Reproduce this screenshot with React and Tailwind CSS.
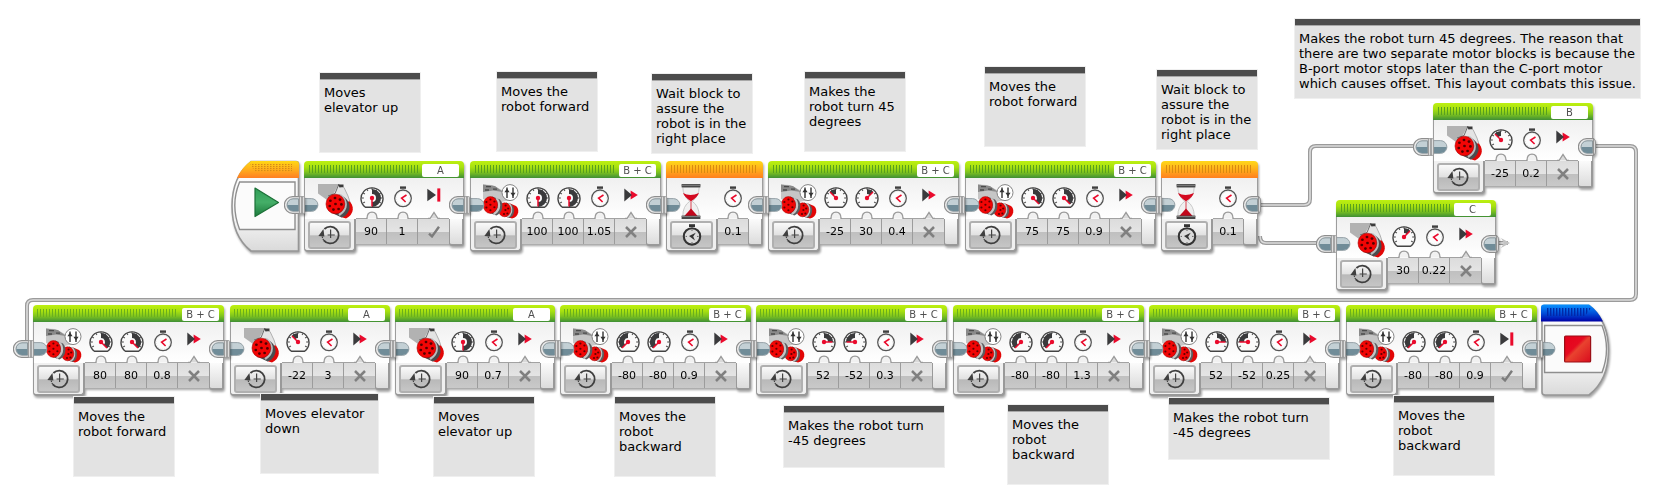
import React from "react";

const GO = -45;

const NODES = [
  {
    kind: "large", x: 304, y: 161, port: "A", motor: "single", end: "brake",
    fields: [{ v: "90", g: 180 }, { v: "1" }],
  },
  {
    kind: "large", x: 470, y: 161, port: "B + C", motor: "double", end: "coast",
    fields: [{ v: "100", g: 180 }, { v: "100", g: 180 }, { v: "1.05" }],
  },
  { kind: "wait", x: 666, y: 161, fields: [{ v: "0.1" }] },
  {
    kind: "large", x: 768, y: 161, port: "B + C", motor: "double", end: "coast",
    fields: [{ v: "-25", g: GO }, { v: "30", g: 45 }, { v: "0.4" }],
  },
  {
    kind: "large", x: 965, y: 161, port: "B + C", motor: "double", end: "coast",
    fields: [{ v: "75", g: 135 }, { v: "75", g: 135 }, { v: "0.9" }],
  },
  { kind: "wait", x: 1161, y: 161, open: true, fields: [{ v: "0.1" }] },
  {
    kind: "large", x: 1433, y: 103, port: "B", motor: "single", end: "coast", open: true,
    fields: [{ v: "-25", g: GO }, { v: "0.2" }],
  },
  {
    kind: "large", x: 1336, y: 200, port: "C", motor: "single", end: "coast", open: true,
    fields: [{ v: "30", g: 45 }, { v: "0.22" }],
  },
  {
    kind: "large", x: 33, y: 305, port: "B + C", motor: "double", end: "coast", stripes: true,
    fields: [{ v: "80", g: 135 }, { v: "80", g: 135 }, { v: "0.8" }],
  },
  {
    kind: "large", x: 230, y: 305, port: "A", motor: "single", end: "coast", stripes: true,
    fields: [{ v: "-22", g: GO }, { v: "3" }],
  },
  {
    kind: "large", x: 395, y: 305, port: "A", motor: "single", end: "coast", stripes: true,
    fields: [{ v: "90", g: 180 }, { v: "0.7" }],
  },
  {
    kind: "large", x: 560, y: 305, port: "B + C", motor: "double", end: "coast", stripes: true,
    fields: [{ v: "-80", g: -135 }, { v: "-80", g: -135 }, { v: "0.9" }],
  },
  {
    kind: "large", x: 756, y: 305, port: "B + C", motor: "double", end: "coast", stripes: true,
    fields: [{ v: "52", g: 90 }, { v: "-52", g: -90 }, { v: "0.3" }],
  },
  {
    kind: "large", x: 953, y: 305, port: "B + C", motor: "double", end: "coast", stripes: true,
    fields: [{ v: "-80", g: -135 }, { v: "-80", g: -135 }, { v: "1.3" }],
  },
  {
    kind: "large", x: 1149, y: 305, port: "B + C", motor: "double", end: "coast", stripes: true,
    fields: [{ v: "52", g: 90 }, { v: "-52", g: -90 }, { v: "0.25" }],
  },
  {
    kind: "large", x: 1346, y: 305, port: "B + C", motor: "double", end: "brake", stripes: true,
    fields: [{ v: "-80", g: -135 }, { v: "-80", g: -135 }, { v: "0.9" }],
  },
];

const NOTES = [
  { x: 319, y: 72, size: "small", lines: ["Moves", "elevator up"] },
  { x: 496, y: 71, size: "small", lines: ["Moves the", "robot forward"] },
  { x: 651, y: 73, size: "small", lines: ["Wait block to", "assure the", "robot is in the", "right place"] },
  { x: 804, y: 71, size: "small", lines: ["Makes the", "robot turn 45", "degrees"] },
  { x: 984, y: 66, size: "small", lines: ["Moves the", "robot forward"] },
  { x: 1156, y: 69, size: "small", lines: ["Wait block to", "assure the", "robot is in the", "right place"] },
  {
    x: 1294, y: 18, size: "large",
    lines: [
      "Makes the robot turn 45 degrees. The reason that",
      "there are two separate motor blocks is because the",
      "B-port motor stops later than the C-port motor",
      "which causes offset. This layout combats this issue.",
    ],
  },
  { x: 73, y: 396, size: "small", lines: ["Moves the", "robot forward"] },
  { x: 260, y: 393, size: "medium", lines: ["Moves elevator", "down"] },
  { x: 433, y: 396, size: "small", lines: ["Moves", "elevator up"] },
  { x: 614, y: 396, size: "small", lines: ["Moves the", "robot", "backward"] },
  { x: 783, y: 405, size: "wide", lines: ["Makes the robot turn", "-45 degrees"] },
  { x: 1007, y: 404, size: "small", lines: ["Moves the", "robot", "backward"] },
  { x: 1168, y: 397, size: "wide", lines: ["Makes the robot turn", "-45 degrees"] },
  { x: 1393, y: 395, size: "small", lines: ["Moves the", "robot", "backward"] },
];

const NOTE_SIZE = {
  small: "w-[102px] h-[81px]",
  medium: "w-[119px] h-[81px]",
  wide: "w-[162px] h-[63px]",
  large: "w-[347px] h-[81px]",
};

const BLOCK_WIDTH = { 1: "w-[97px]", 3: "w-[160px]", 4: "w-[191px]" };

function point(angle, r) {
  const a = (angle * Math.PI) / 180;
  return `${(12 + r * Math.sin(a)).toFixed(2)} ${(12 - r * Math.cos(a)).toFixed(2)}`;
}

function Gauge({ angle }) {
  const sweep = angle > 0 ? 1 : 0;
  const ticks = [-120, -90, -60, -30, 0, 30, 60, 90, 120];
  return (
    <svg viewBox="0 0 24 23" className="h-[23px] w-6" aria-hidden="true">
      <path d="M5.4 21.3A11 10.8 0 1 1 18.6 21.3Z" fill="#fafafa" stroke="#444" strokeWidth="1.4" strokeLinejoin="round" />
      {ticks.map((t) => (
        <path key={t} d={`M${point(t, 10.2)}L${point(t, 8.2)}`} stroke="#555" strokeWidth="1.1" />
      ))}
      <path
        d={`M${point(0, 9)}A9 9 0 0 ${sweep} ${point(angle, 9)}L${point(angle, 4)}A4 4 0 0 ${1 - sweep} ${point(0, 4)}Z`}
        fill="#3a3a3c"
      />
      <path d={`M12 12L${point(angle, 8.4)}`} stroke="#ea0a2c" strokeWidth="1.5" />
      <circle cx="12" cy="12" r="2.2" fill="#ea0a2c" />
    </svg>
  );
}

function Stopwatch() {
  return (
    <svg viewBox="0 0 20 22" className="h-[22px] w-5" aria-hidden="true">
      <rect x="7" y="0.4" width="6" height="2.4" fill="#3f3f3f" />
      <circle cx="10" cy="12.3" r="8.3" fill="#fdfdfd" stroke="#555" strokeWidth="1.3" />
      <circle cx="10" cy="12.3" r="6.9" fill="none" stroke="#d5d5d5" strokeWidth="0.8" strokeDasharray="1 1.2" />
      <path d="M13.5 9L8.6 12.2L12.6 16" fill="none" stroke="#ea0a2c" strokeWidth="1.6" />
    </svg>
  );
}

function EndIcon({ type }) {
  return (
    <svg viewBox="0 0 14 14" className="mb-1 h-3.5 w-3.5" aria-hidden="true">
      {type === "brake" ? (
        <>
          <path d="M0.3 0.8L9 7L0.3 13.2Z" fill="#3a3a3c" />
          <rect x="10.3" y="0.4" width="3" height="13.2" fill="#ea0a2c" />
        </>
      ) : (
        <>
          <path d="M6.6 2.4L13.8 7L6.6 11.6Z" fill="#ea0a2c" />
          <path d="M0.3 0.6L8 7L0.3 13.4Z" fill="#3a3a3c" />
        </>
      )}
    </svg>
  );
}

function SingleMotor() {
  return (
    <svg viewBox="0 0 35 35" className="h-[35px] w-[35px]" aria-hidden="true">
      <path d="M18 0.5L26 3.5L30 12L34 24L25 30L10 18Z" fill="#e4e4e4" stroke="#a8a8a8" strokeWidth="0.9" />
      <path d="M0 0H21L15.5 9.5L9 16L0 9.5Z" fill="#b2b2b2" />
      <path d="M21 0L17 9.5L10 12" stroke="#6d6d6d" strokeWidth="1" fill="none" />
      <path d="M20 0.4L25.5 0.4L25.5 3L21.5 3.6Z" fill="#3b3b3b" />
      <path d="M31 17Q35 20.4 34.8 25.4Q34.4 31 28 34.4L23 33L26 22Z" fill="#e20606" />
      <path d="M21 10.6Q28 13 30.6 18.6Q33 24 29.6 29Q27.6 32.6 23.6 33.6L13 28.6Z" fill="#4a4c4e" />
      <path d="M22 11Q27.4 15 27.6 20.6Q27.6 26.6 21 31" stroke="#b9bbbd" strokeWidth="2.6" fill="none" />
      <ellipse cx="17.4" cy="20" rx="9.4" ry="9.8" fill="#f20505" stroke="#a80000" strokeWidth="0.6" />
      {[
        [17.5, 20], [17, 14], [22, 15.6], [23.4, 20.4], [20.6, 25], [15.4, 25.6], [11.8, 22], [12.4, 16.8],
      ].map(([x, y]) => (
        <ellipse key={`${x}-${y}`} cx={x} cy={y} rx="1.4" ry="1.3" fill="#520000" />
      ))}
    </svg>
  );
}

function DoubleMotor() {
  return (
    <svg viewBox="0 0 36 35" className="h-[35px] w-9" aria-hidden="true">
      <path d="M0 0.4L9 1L19 6L27 16L14 19L0 15Z" fill="#c6c6c6" />
      <path d="M0 0.4L12 2L20 8L10 6.6L0 8Z" fill="#8a8a8a" />
      <path d="M3 2.6H8M10 5.2H14M2 6H6" stroke="#4b4b4b" strokeWidth="1.3" />
      <path d="M26 19L33 22Q35.8 24.4 35.2 28.6Q34 33.4 29 34.6L24 33Z" fill="#e20606" />
      <path d="M23 18.6L29 20.8Q32 24 30.8 28.8Q30 32.6 26.6 34L18 31Z" fill="#5b5d5f" />
      <path d="M25.6 19.6Q29 23 28 28Q27 31.6 24 33.2" stroke="#c4c4c4" strokeWidth="2.2" fill="none" />
      <ellipse cx="21.6" cy="25.8" rx="6.2" ry="7" fill="#f20505" stroke="#a80000" strokeWidth="0.5" />
      <path d="M9 12.4L17 15.6Q20.4 19.6 19 25Q17.8 29.4 13.4 31.4L4 28Z" fill="#5b5d5f" />
      <path d="M13 14.4Q17 18.4 15.6 24Q14.4 28.2 10.6 30" stroke="#c4c4c4" strokeWidth="2.6" fill="none" />
      <ellipse cx="7.4" cy="21" rx="7.2" ry="8.4" fill="#f20505" stroke="#a80000" strokeWidth="0.5" />
      {[
        [7.4, 20.8], [7.4, 15.4], [11.4, 17.6], [11.4, 23.2], [7.4, 26.2], [3.4, 23.6], [3.4, 18],
        [22.4, 26], [22.6, 21.6], [25.2, 24.4], [24.4, 29.4], [21, 30],
      ].map(([x, y]) => (
        <ellipse key={`${x}-${y}`} cx={x} cy={y} rx="1.1" ry="1" fill="#600000" />
      ))}
      <circle cx="27" cy="8.6" r="8" fill="#fff" stroke="#777" strokeWidth="0.9" />
      <path d="M24 3.4V14M30 3.4V14" stroke="#333" strokeWidth="1.4" />
      <path d="M21.4 8.2L24 4.6L26.6 8.2ZM27.4 8.8L30 12.4L32.6 8.8Z" fill="#333" />
    </svg>
  );
}

function Hourglass() {
  return (
    <svg viewBox="0 0 20 35" className="h-[35px] w-5" aria-hidden="true">
      <path d="M1.8 3H18.2Q18.2 12 11.2 17.3Q18.2 22 18.2 32H1.8Q1.8 22 8.8 17.3Q1.8 12 1.8 3Z" fill="#f0f0f0" stroke="#c4c4c4" strokeWidth="0.9" />
      <path d="M2 9Q9 12.8 18 9Q16 13.8 10.4 17H9.6Q4 13.8 2 9Z" fill="#d40920" />
      <path d="M10 16V27" stroke="#d6303f" strokeWidth="0.9" />
      <path d="M10 24.4L16.6 32H3.4Z" fill="#c2071c" />
      <rect x="0.6" y="0" width="18.8" height="3.4" fill="#484848" />
      <rect x="0.6" y="0.8" width="18.8" height="0.9" fill="#8d8d8d" />
      <rect x="0.6" y="31.6" width="18.8" height="3.4" fill="#484848" />
      <rect x="0.6" y="32.2" width="18.8" height="0.8" fill="#8d8d8d" />
    </svg>
  );
}

function TimeModeIcon() {
  return (
    <svg viewBox="0 0 24 20" className="h-5 w-6" aria-hidden="true">
      <path d="M6.4 4A8.4 8.4 0 1 1 5.8 15.4" fill="none" stroke="#3f3f3f" strokeWidth="1.8" />
      <path d="M5.8 15.4A8.4 8.4 0 0 1 4.2 10" fill="none" stroke="#3f3f3f" strokeWidth="1.2" strokeDasharray="1.6 1" />
      <path d="M0.4 11L5.4 4L6.4 11.4Z" fill="#3f3f3f" />
      <path d="M12.6 4.4V13M9.6 10H16.8" stroke="#444" strokeWidth="1.2" />
    </svg>
  );
}

function WaitModeIcon() {
  return (
    <svg viewBox="0 0 20 22" className="h-[22px] w-5" aria-hidden="true">
      <rect x="7" y="0.2" width="6" height="2.8" fill="#333" />
      <circle cx="10" cy="12.4" r="8.2" fill="#dadada" stroke="#333" strokeWidth="2.1" />
      <path d="M13.8 8.8L7 12L13 16.4L11.2 12.4Z" fill="#333" />
      <path d="M10 5.6V7M10 18V19.2M3.6 12.4H5M15 12.4H16.6" stroke="#666" strokeWidth="1" />
    </svg>
  );
}

function Cross() {
  return (
    <svg viewBox="0 0 12 12" className="h-3 w-3" aria-hidden="true">
      <path d="M1 1L11 11M11 1L1 11" stroke="#808080" strokeWidth="2.5" />
    </svg>
  );
}

function Check() {
  return (
    <svg viewBox="0 0 12 12" className="h-3 w-3" aria-hidden="true">
      <path d="M1 7.6L4 10.4L11 0.8" fill="none" stroke="#7c7c7c" strokeWidth="2.4" />
    </svg>
  );
}

function Socket() {
  return (
    <svg viewBox="0 0 16 18" className="h-[18px] w-4" aria-hidden="true">
      <path d="M0 2.6H7.5A6.4 6.4 0 0 1 7.5 15.4H0Z" fill="#c3d0d5" stroke="#8f9ba0" strokeWidth="0.9" />
      <path d="M0 9H13.6A6.2 6.2 0 0 1 7.5 15H0Z" fill="#708c98" />
    </svg>
  );
}

function Plug({ open }) {
  return (
    <svg viewBox="0 0 22 18" className="h-[18px] w-[22px]" aria-hidden="true">
      <path d="M15.6 0.6H8.6A8.2 8.4 0 0 0 8.6 17.4H15.6Z" fill="#ededed" stroke="#8e8e8e" strokeWidth="1.2" />
      <path d="M14.6 2.8H9A6 6.2 0 0 0 9 15.2H14.6Z" fill="#c3d0d5" stroke="#7d8a90" strokeWidth="0.9" />
      <path d="M14.4 9H3.4A5.8 6 0 0 0 9 15H14.4Z" fill="#708c98" />
      {open ? (
        <path d="M15.4 0.8Q17.4 1.4 17.4 4V14Q17.4 16.6 15.4 17.2Z" fill="#e2e2e2" stroke="#8e8e8e" strokeWidth="1" />
      ) : (
        <>
          <rect x="15.4" y="0.6" width="5.2" height="16.8" rx="1" fill="#dedede" stroke="#9a9a9a" strokeWidth="1" />
          <path d="M18 1V17" stroke="#7e7e7e" strokeWidth="1.2" />
        </>
      )}
    </svg>
  );
}

function Bump({ pointed }) {
  return (
    <div className="flex h-[7px] w-full items-end">
      <span className="h-px flex-1 bg-[#a2a2a2]" />
      <svg viewBox="0 0 12 8" className="-mt-px h-2 w-3" aria-hidden="true">
        {pointed ? (
          <path d="M0 7.5H2L6 1.4L10 7.5H12" fill="#d9d9d9" stroke="#9a9a9a" strokeWidth="1.3" />
        ) : (
          <path d="M0 7.5H1Q1 1.2 6 1.2Q11 1.2 11 7.5H12" fill="#f1f1f1" stroke="#9a9a9a" strokeWidth="1.3" />
        )}
      </svg>
      <span className="h-px flex-1 bg-[#a2a2a2]" />
    </div>
  );
}

function Column({ icon, pointed, last, children }) {
  return (
    <div className="flex min-w-0 flex-1 flex-col">
      <div className="flex h-[34px] items-center justify-center pt-1">{icon}</div>
      <Bump pointed={pointed} />
      <div
        className={`flex h-[25px] items-center justify-center pt-px bg-[linear-gradient(#dcdcdc,#e4e4e4_50%,#c0c0c0_54%,#c9c9c9)] ${
          last ? "" : "border-r border-[#9c9c9c]"
        }`}
      >
        {children}
      </div>
    </div>
  );
}

function Block({ node }) {
  const wait = node.kind === "wait";
  const count = node.fields.length + (node.end ? 1 : 0);
  const head = wait
    ? "bg-[linear-gradient(#ffd91a,#ffb21a_45%,#ff7f1e)]"
    : "bg-[linear-gradient(#bdf011,#a9e20f_35%,#7fc41f_65%,#3f8f35)]";
  const grip = wait
    ? "bg-[radial-gradient(#d98a10_0.8px,transparent_1px)] bg-[size:3px_2px]"
    : node.stripes
      ? "bg-[linear-gradient(90deg,#6bb01c_1px,transparent_1px)] bg-[size:3px_8px]"
      : "bg-[radial-gradient(#58a01e_0.8px,transparent_1px)] bg-[size:3px_2px]";
  return (
    <section
      aria-label={wait ? "Wait" : `Motor ${node.port}`}
      className={`absolute ${BLOCK_WIDTH[count]} drop-shadow-[1px_2px_1px_rgba(0,0,0,0.35)]`}
      style={{ left: node.x, top: node.y }}
    >
      <header className={`flex h-[17px] items-start gap-1 rounded-t-[4px] pr-[5px] pl-1 ${head}`}>
        <span className={`mt-1 h-2 flex-1 ${grip}`} />
        {!wait && (
          <button
            type="button"
            aria-label={`Port ${node.port}`}
            className="mt-[3px] flex h-[13px] w-[37px] items-center justify-center rounded-[2px] bg-white text-[10px] leading-none whitespace-nowrap text-[#505050]"
          >
            {node.port}
          </button>
        )}
      </header>
      <div className="flex items-start">
        <div className="flex w-[52px] flex-col">
          <div className="flex h-[41px] items-start justify-end border-l border-[#9d9d9d] bg-[linear-gradient(#f0f0f0,#ffffff)] pt-[6px] pr-[3px]">
            {wait ? (
              <span className="mr-[14px]"><Hourglass /></span>
            ) : node.motor === "single" ? (
              <SingleMotor />
            ) : (
              <DoubleMotor />
            )}
          </div>
          <div className="flex h-[33px] justify-center rounded-b-[4px] border-r-2 border-b-2 border-l border-[#999] bg-[#f0f0f0] pt-[2px]">
            <button
              type="button"
              aria-label="Mode"
              className="flex h-[28px] w-[43px] items-center justify-center rounded-[3px] border-2 border-[#b0b0b0] bg-[linear-gradient(#fafafa,#e2e2e2_48%,#b9b9b9_54%,#c6c6c6)]"
            >
              {wait ? <WaitModeIcon /> : <TimeModeIcon />}
            </button>
          </div>
        </div>
        <div className="flex min-w-0 flex-1 bg-[linear-gradient(#f0f0f0,#ffffff_60%)]">
          {node.fields.map((f, i) => (
            <Column
              key={i}
              icon={f.g === undefined ? <Stopwatch /> : <Gauge angle={f.g} />}
              last={wait}
            >
              <input
                type="text"
                aria-label={f.g === undefined ? "Seconds" : "Power"}
                defaultValue={f.v}
                className="w-full bg-transparent text-center text-[11px] leading-4 text-black outline-none"
              />
            </Column>
          ))}
          {node.end && (
            <Column icon={<EndIcon type={node.end} />} pointed last>
              <button type="button" aria-label="Brake at end" aria-pressed={node.end === "brake"}>
                {node.end === "brake" ? <Check /> : <Cross />}
              </button>
            </Column>
          )}
        </div>
        <div className="flex w-[15px] flex-col">
          <div className="h-[41px] border-r border-[#9d9d9d] bg-[linear-gradient(#f0f0f0,#ffffff)]" />
          <div className="h-[27px] rounded-b-[3px] border-r-2 border-b-2 border-l border-[#999] bg-[linear-gradient(#fbfbfb,#dcdcdc)]" />
        </div>
      </div>
      <div className="absolute top-[35px] left-0"><Socket /></div>
      <div className="absolute top-[35px] -right-[7px]"><Plug open={node.open} /></div>
    </section>
  );
}

function StartBlock() {
  return (
    <div className="absolute top-[160px] left-[231px] drop-shadow-[1px_2px_1px_rgba(0,0,0,0.35)]">
      <svg viewBox="0 0 69 92" className="h-[92px] w-[69px]" role="img" aria-label="Start">
        <defs>
          <linearGradient id="startHead" x1="0" y1="0" x2="0" y2="1">
            <stop offset="0" stopColor="#ffd814" />
            <stop offset="0.5" stopColor="#ffae1c" />
            <stop offset="1" stopColor="#ff7f22" />
          </linearGradient>
          <linearGradient id="shell" x1="0" y1="0" x2="0" y2="1">
            <stop offset="0" stopColor="#ffffff" />
            <stop offset="0.7" stopColor="#f0f0f0" />
            <stop offset="1" stopColor="#dadada" />
          </linearGradient>
          <linearGradient id="play" x1="0" y1="0" x2="0" y2="1">
            <stop offset="0" stopColor="#2f9e57" />
            <stop offset="0.5" stopColor="#45ae68" />
            <stop offset="1" stopColor="#1b7a3b" />
          </linearGradient>
          <pattern id="startDots" width="3" height="2" patternUnits="userSpaceOnUse">
            <rect width="1.5" height="1.1" fill="#d58a18" />
          </pattern>
        </defs>
        <path d="M20 1.5H65Q67.5 1.5 67.5 4V91H20Q1 76 1 46Q1 17 20 1.5Z" fill="url(#shell)" stroke="#969696" strokeWidth="1.6" />
        <path d="M20 1H65Q68 1 68 4V18H6Q11 7 20 1Z" fill="url(#startHead)" />
        <path d="M19 4H61V12H24Z" fill="url(#startDots)" />
        <path d="M8.6 22H64V69.5H8.6Q-1 45 8.6 22Z" fill="#fbfbfb" stroke="#8e8e8e" strokeWidth="1.4" />
        <path d="M24 28L47.5 42.5L24 56.5Z" fill="url(#play)" stroke="#1c7037" strokeWidth="1.2" strokeLinejoin="round" />
      </svg>
      <div className="absolute top-[36px] left-[53px]"><Plug /></div>
    </div>
  );
}

function StopBlock() {
  return (
    <div className="absolute top-[304px] left-[1541px] drop-shadow-[1px_2px_1px_rgba(0,0,0,0.35)]">
      <svg viewBox="0 0 69 92" className="h-[92px] w-[69px]" role="img" aria-label="Stop">
        <defs>
          <linearGradient id="stopHead" x1="0" y1="0" x2="0" y2="1">
            <stop offset="0" stopColor="#0a93ff" />
            <stop offset="0.55" stopColor="#0049d6" />
            <stop offset="1" stopColor="#0000a4" />
          </linearGradient>
          <linearGradient id="stopShell" x1="0" y1="0" x2="0" y2="1">
            <stop offset="0" stopColor="#ffffff" />
            <stop offset="0.7" stopColor="#f0f0f0" />
            <stop offset="1" stopColor="#dadada" />
          </linearGradient>
          <linearGradient id="stopRed" x1="0" y1="0" x2="1" y2="1">
            <stop offset="0" stopColor="#e5001b" />
            <stop offset="0.4" stopColor="#e60a20" />
            <stop offset="0.5" stopColor="#e9432f" />
            <stop offset="1" stopColor="#d90b1d" />
          </linearGradient>
          <pattern id="stopLines" width="3" height="8" patternUnits="userSpaceOnUse">
            <rect width="1.4" height="8" fill="#0029a8" />
          </pattern>
        </defs>
        <path d="M3 1.5H48Q67.5 17 67.5 46Q67.5 76 48 91H4Q1 91 1 88V4Q1 1.5 3 1.5Z" fill="url(#stopShell)" stroke="#969696" strokeWidth="1.6" />
        <path d="M3 0.6H48Q57 7 62 17.5H0V3.6Q0 0.6 3 0.6Z" fill="url(#stopHead)" />
        <path d="M5 4H50L44 12H5Z" fill="url(#stopLines)" />
        <path d="M3.6 21.5H61Q70 45 61 68.5H3.6Z" fill="#fbfbfb" stroke="#8e8e8e" strokeWidth="1.4" />
        <rect x="23.6" y="32" width="26" height="26" rx="1" fill="url(#stopRed)" stroke="#9c0f16" strokeWidth="1.2" />
      </svg>
      <div className="absolute top-[36px] left-0"><Socket /></div>
    </div>
  );
}

function Wires() {
  const paths = [
    "M1260 205H1304Q1310 205 1310 199V152Q1310 146 1316 146H1416",
    "M1260 236Q1260 243 1266 243H1320",
    "M1592 146H1630Q1636 146 1636 152V294Q1636 300 1630 300H33Q27 300 27 306V344",
    "M1492 243H1508",
  ];
  return (
    <svg viewBox="0 0 1656 494" className="absolute top-0 left-0 h-[494px] w-[1656px]" aria-hidden="true">
      {paths.map((d) => (
        <g key={d} fill="none">
          <path d={d} stroke="#9b9b9b" strokeWidth="4" />
          <path d={d} stroke="#dcdcdc" strokeWidth="1.6" />
        </g>
      ))}
      <path d="M1501 238L1510 243L1501 248L1504 243Z" fill="#c4c4c4" />
    </svg>
  );
}

function Note({ note }) {
  return (
    <article
      className={`absolute border border-[#efefef] bg-[#e3e3e3] ${NOTE_SIZE[note.size]}`}
      style={{ left: note.x, top: note.y }}
    >
      <div className="h-[7px] border-b border-[#a8a8a8] bg-[#4c4c4c]" />
      <p className="pt-[5px] pl-1 text-[13px] leading-[15px] whitespace-nowrap text-black">
        {note.lines.map((line) => (
          <span key={line} className="block">{line}</span>
        ))}
      </p>
    </article>
  );
}

const LOOSE_PLUGS = [
  { x: 1413, y: 138 },
  { x: 1316, y: 235 },
  { x: 13, y: 340 },
];

export default function App() {
  return (
    <main className="relative min-h-screen overflow-hidden bg-white font-['Verdana','DejaVu_Sans',sans-serif]">
      <Wires />
      <StopBlock />
      {[...NODES].reverse().map((n) => (
        <Block key={`${n.x}-${n.y}`} node={n} />
      ))}
      <StartBlock />
      {LOOSE_PLUGS.map((p) => (
        <div key={p.x} className="absolute" style={{ left: p.x, top: p.y }}><Plug /></div>
      ))}
      {NOTES.map((n) => (
        <Note key={`${n.x}-${n.y}`} note={n} />
      ))}
    </main>
  );
}
